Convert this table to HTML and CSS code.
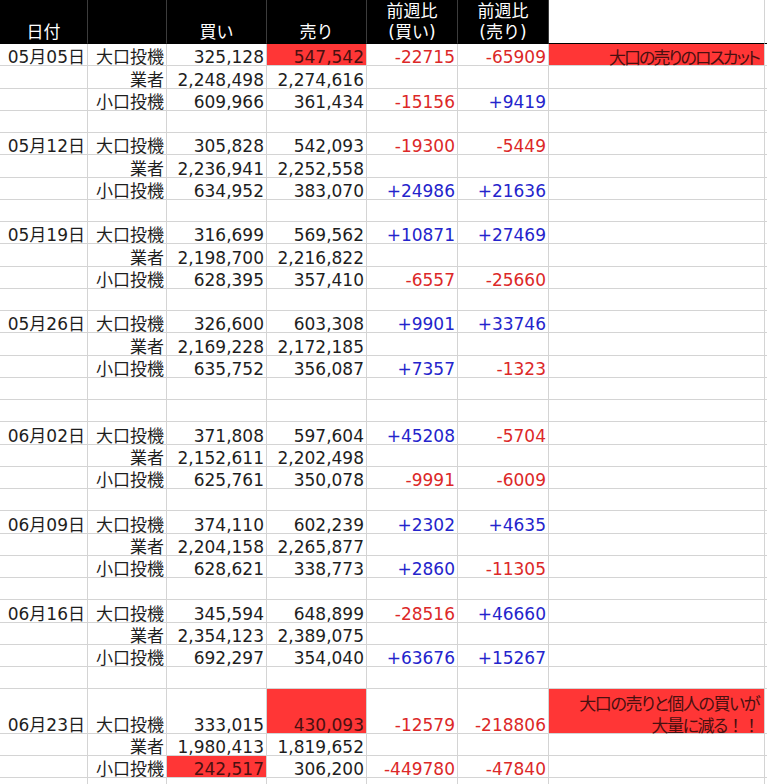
FILE: index.html
```html
<!DOCTYPE html>
<html lang="ja">
<head>
<meta charset="utf-8">
<title>建玉</title>
<link rel="stylesheet" href="styles.css">
</head>
<body>
<div class="sheet">
  <div class="row head">
    <div class="c h">日付</div>
    <div class="c h"></div>
    <div class="c h">買い</div>
    <div class="c h">売り</div>
    <div class="c h">前週比<br>(買い)</div>
    <div class="c h">前週比<br>(売り)</div>
    <div class="c hw"></div>
    <div class="c hw"></div>
  </div>

  <div class="row"><div class="c">05月05日</div><div class="c">大口投機</div><div class="c">325,128</div><div class="c fill">547,542</div><div class="c neg">-22715</div><div class="c neg">-65909</div><div class="c fill note note1">大口の売りのロスカット</div><div class="c"></div></div>
  <div class="row"><div class="c"></div><div class="c">業者</div><div class="c">2,248,498</div><div class="c">2,274,616</div><div class="c"></div><div class="c"></div><div class="c"></div><div class="c"></div></div>
  <div class="row"><div class="c"></div><div class="c">小口投機</div><div class="c">609,966</div><div class="c">361,434</div><div class="c neg">-15156</div><div class="c pos">+9419</div><div class="c"></div><div class="c"></div></div>
  <div class="row"><div class="c"></div><div class="c"></div><div class="c"></div><div class="c"></div><div class="c"></div><div class="c"></div><div class="c"></div><div class="c"></div></div>

  <div class="row"><div class="c">05月12日</div><div class="c">大口投機</div><div class="c">305,828</div><div class="c">542,093</div><div class="c neg">-19300</div><div class="c neg">-5449</div><div class="c"></div><div class="c"></div></div>
  <div class="row"><div class="c"></div><div class="c">業者</div><div class="c">2,236,941</div><div class="c">2,252,558</div><div class="c"></div><div class="c"></div><div class="c"></div><div class="c"></div></div>
  <div class="row"><div class="c"></div><div class="c">小口投機</div><div class="c">634,952</div><div class="c">383,070</div><div class="c pos">+24986</div><div class="c pos">+21636</div><div class="c"></div><div class="c"></div></div>
  <div class="row"><div class="c"></div><div class="c"></div><div class="c"></div><div class="c"></div><div class="c"></div><div class="c"></div><div class="c"></div><div class="c"></div></div>

  <div class="row"><div class="c">05月19日</div><div class="c">大口投機</div><div class="c">316,699</div><div class="c">569,562</div><div class="c pos">+10871</div><div class="c pos">+27469</div><div class="c"></div><div class="c"></div></div>
  <div class="row"><div class="c"></div><div class="c">業者</div><div class="c">2,198,700</div><div class="c">2,216,822</div><div class="c"></div><div class="c"></div><div class="c"></div><div class="c"></div></div>
  <div class="row"><div class="c"></div><div class="c">小口投機</div><div class="c">628,395</div><div class="c">357,410</div><div class="c neg">-6557</div><div class="c neg">-25660</div><div class="c"></div><div class="c"></div></div>
  <div class="row"><div class="c"></div><div class="c"></div><div class="c"></div><div class="c"></div><div class="c"></div><div class="c"></div><div class="c"></div><div class="c"></div></div>

  <div class="row"><div class="c">05月26日</div><div class="c">大口投機</div><div class="c">326,600</div><div class="c">603,308</div><div class="c pos">+9901</div><div class="c pos">+33746</div><div class="c"></div><div class="c"></div></div>
  <div class="row"><div class="c"></div><div class="c">業者</div><div class="c">2,169,228</div><div class="c">2,172,185</div><div class="c"></div><div class="c"></div><div class="c"></div><div class="c"></div></div>
  <div class="row"><div class="c"></div><div class="c">小口投機</div><div class="c">635,752</div><div class="c">356,087</div><div class="c pos">+7357</div><div class="c neg">-1323</div><div class="c"></div><div class="c"></div></div>
  <div class="row"><div class="c"></div><div class="c"></div><div class="c"></div><div class="c"></div><div class="c"></div><div class="c"></div><div class="c"></div><div class="c"></div></div>
  <div class="row"><div class="c"></div><div class="c"></div><div class="c"></div><div class="c"></div><div class="c"></div><div class="c"></div><div class="c"></div><div class="c"></div></div>

  <div class="row"><div class="c">06月02日</div><div class="c">大口投機</div><div class="c">371,808</div><div class="c">597,604</div><div class="c pos">+45208</div><div class="c neg">-5704</div><div class="c"></div><div class="c"></div></div>
  <div class="row"><div class="c"></div><div class="c">業者</div><div class="c">2,152,611</div><div class="c">2,202,498</div><div class="c"></div><div class="c"></div><div class="c"></div><div class="c"></div></div>
  <div class="row"><div class="c"></div><div class="c">小口投機</div><div class="c">625,761</div><div class="c">350,078</div><div class="c neg">-9991</div><div class="c neg">-6009</div><div class="c"></div><div class="c"></div></div>
  <div class="row"><div class="c"></div><div class="c"></div><div class="c"></div><div class="c"></div><div class="c"></div><div class="c"></div><div class="c"></div><div class="c"></div></div>

  <div class="row"><div class="c">06月09日</div><div class="c">大口投機</div><div class="c">374,110</div><div class="c">602,239</div><div class="c pos">+2302</div><div class="c pos">+4635</div><div class="c"></div><div class="c"></div></div>
  <div class="row"><div class="c"></div><div class="c">業者</div><div class="c">2,204,158</div><div class="c">2,265,877</div><div class="c"></div><div class="c"></div><div class="c"></div><div class="c"></div></div>
  <div class="row"><div class="c"></div><div class="c">小口投機</div><div class="c">628,621</div><div class="c">338,773</div><div class="c pos">+2860</div><div class="c neg">-11305</div><div class="c"></div><div class="c"></div></div>
  <div class="row"><div class="c"></div><div class="c"></div><div class="c"></div><div class="c"></div><div class="c"></div><div class="c"></div><div class="c"></div><div class="c"></div></div>

  <div class="row"><div class="c">06月16日</div><div class="c">大口投機</div><div class="c">345,594</div><div class="c">648,899</div><div class="c neg">-28516</div><div class="c pos">+46660</div><div class="c"></div><div class="c"></div></div>
  <div class="row"><div class="c"></div><div class="c">業者</div><div class="c">2,354,123</div><div class="c">2,389,075</div><div class="c"></div><div class="c"></div><div class="c"></div><div class="c"></div></div>
  <div class="row"><div class="c"></div><div class="c">小口投機</div><div class="c">692,297</div><div class="c">354,040</div><div class="c pos">+63676</div><div class="c pos">+15267</div><div class="c"></div><div class="c"></div></div>
  <div class="row"><div class="c"></div><div class="c"></div><div class="c"></div><div class="c"></div><div class="c"></div><div class="c"></div><div class="c"></div><div class="c"></div></div>

  <div class="row tall"><div class="c">06月23日</div><div class="c">大口投機</div><div class="c">333,015</div><div class="c fill">430,093</div><div class="c neg">-12579</div><div class="c neg">-218806</div><div class="c fill note note2"><p class="nt">大口の売りと個人の買いが<br>大量に減る<span class="bang">！！</span></p></div><div class="c"></div></div>
  <div class="row"><div class="c"></div><div class="c">業者</div><div class="c">1,980,413</div><div class="c">1,819,652</div><div class="c"></div><div class="c"></div><div class="c"></div><div class="c"></div></div>
  <div class="row"><div class="c"></div><div class="c">小口投機</div><div class="c fill">242,517</div><div class="c">306,200</div><div class="c neg">-449780</div><div class="c neg">-47840</div><div class="c"></div><div class="c"></div></div>
  <div class="row"><div class="c"></div><div class="c"></div><div class="c"></div><div class="c"></div><div class="c"></div><div class="c"></div><div class="c"></div><div class="c"></div></div>
</div>
</body>
</html>
```

FILE: styles.css
```css
html, body {
  margin: 0;
  padding: 0;
  overflow: hidden;
  background: #ffffff;
}

.sheet {
  width: 767px;
  font-family: "DejaVu Sans", "Noto Sans CJK JP", sans-serif;
  font-size: 17px;
  color: #1e1e1e;
}

.row {
  display: grid;
  grid-template-columns: 88px 79px 100px 100px 91px 91px 216px 2px;
  height: 22.25px;
}

.row.head {
  height: 44px;
}

.row.tall {
  height: 44.5px;
}

.c {
  box-sizing: border-box;
  border-right: 1px solid #d4d4d4;
  border-bottom: 1px solid #d4d4d4;
  display: flex;
  align-items: flex-end;
  justify-content: flex-end;
  text-align: right;
  padding-right: 2px;
  line-height: 16px;
  white-space: nowrap;
  overflow: hidden;
}

.c:last-child {
  border-right: none;
}

.h {
  background: #000000;
  color: #ffffff;
  justify-content: center;
  text-align: center;
  padding-right: 0;
  line-height: 21px;
  border-right-color: #3c3c3c;
  border-bottom-color: #000000;
}

.hw {
  background: #ffffff;
  border-bottom-color: #000000;
}

.neg {
  color: #dc2828;
}

.pos {
  color: #2424cc;
}

.fill {
  background: #ff3636;
  color: #4a1010;
}

.note {
  padding-right: 5px;
  font-family: "Noto Sans CJK JP", sans-serif;
  font-feature-settings: "palt";
  overflow: visible;
}

.note1 {
  letter-spacing: -2px;
  line-height: 17px;
}

.note2 {
  letter-spacing: -1.4px;
  line-height: 22px;
  padding-bottom: 0;
}

.nt {
  margin: 0 0 -3px 0;
  text-align: right;
}

.bang {
  font-feature-settings: normal;
  letter-spacing: -1px;
}
```
